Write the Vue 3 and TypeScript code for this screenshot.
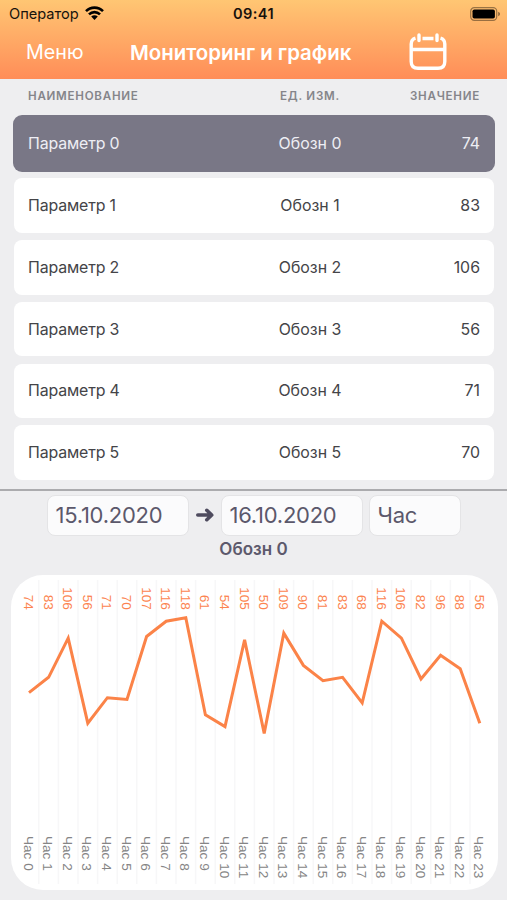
<script setup lang="ts">
interface Row {
  name: string
  unit: string
  value: number
}

const rows: Row[] = [74, 83, 106, 56, 71, 70].map((value, i) => ({
  name: `Параметр ${i}`,
  unit: `Обозн ${i}`,
  value,
}))

const selected = 0

const readings: number[] = [
  74, 83, 106, 56, 71, 70, 107, 116, 118, 61, 54, 105,
  50, 109, 90, 81, 83, 68, 116, 106, 82, 96, 88, 56,
]

const step = 19.6
const points = readings.map((value, i) => ({
  value,
  label: `Час ${i}`,
  x: 18 + i * step,
  y: 42.8 + (118 - value) * 1.7,
}))
const line = points.map((p) => `${p.x.toFixed(1)},${p.y.toFixed(1)}`).join(' ')
const gridLines = points.slice(1).map((p) => p.x - step / 2)
</script>

<template>
  <div class="screen">
    <header class="top">
      <div class="status">
        <div class="carrier">
          <span class="operator">Оператор</span>
          <svg class="wifi" width="19" height="14" viewBox="0 0 19 14">
            <g fill="none" stroke="#000" stroke-width="2.6">
              <path d="M1 5.2C5.8 .4 13.2 .4 18 5.2" />
              <path d="M4 8.4C7.1 5.3 11.9 5.3 15 8.4" />
            </g>
            <path d="M6.2 10.6C8.1 8.8 10.9 8.8 12.8 10.6L9.5 14Z" />
          </svg>
        </div>
        <span class="clock">09:41</span>
        <svg class="battery" width="31" height="14" viewBox="0 0 31 14">
          <rect x=".7" y=".7" width="26" height="12.6" rx="3.6" fill="none" stroke="#000" stroke-opacity=".4" stroke-width="1.2" />
          <rect x="2.5" y="2.4" width="22.4" height="9.2" rx="1.8" />
          <path d="M28.2 4.8c2.4.8 2.4 3.6 0 4.4z" fill-opacity=".45" />
        </svg>
      </div>
      <nav class="nav">
        <span class="menu">Меню</span>
        <h1 class="title">Мониторинг и график</h1>
        <svg class="calendar" width="38" height="38" viewBox="0 0 38 38" fill="none" stroke="#fff" stroke-width="3.4">
          <path d="M6.5 5.1C3.8 5.9 2.2 8 2.2 11V28.5C2.2 33 4.6 35.3 9 35.3H29C33.4 35.3 35.8 33 35.8 28.5V11C35.8 8 34.2 5.9 31.5 5.1" />
          <path d="M13.5 5.5H24.5M2.2 16.5H35.8" />
          <path d="M10 2V7.5M28 2V7.5" stroke-linecap="round" />
        </svg>
      </nav>
    </header>

    <div class="columns heads">
      <span class="head-name">Наименование</span>
      <span class="center">Ед. изм.</span>
      <span class="right">Значение</span>
    </div>

    <main class="list">
      <div
        v-for="(row, i) in rows"
        :key="row.name"
        class="columns row"
        :class="{ selected: i === selected }"
      >
        <span class="name">{{ row.name }}</span>
        <span class="center">{{ row.unit }}</span>
        <span class="right">{{ row.value }}</span>
      </div>
    </main>

    <section class="panel">
      <div class="filters">
        <div class="field date">15.10.2020</div>
        <svg class="arrow" width="18" height="14" viewBox="0 0 18 14" fill="none" stroke="#4e4b5e" stroke-width="3.6" stroke-linecap="round" stroke-linejoin="round">
          <path d="M1.8 7H15M10.8 2.3L15.7 7L10.8 11.7" />
        </svg>
        <div class="field date">16.10.2020</div>
        <div class="field period">Час</div>
      </div>
      <h2 class="caption">Обозн 0</h2>
      <svg class="chart" width="487" height="315" viewBox="0 0 487 315">
        <line v-for="x in gridLines" :key="x" class="grid" :x1="x" :x2="x" y1="5" y2="309" />
        <g v-for="p in points" :key="p.label">
          <text class="value" text-anchor="end" :transform="`translate(${p.x - 5.1} 34.9) rotate(90)`">{{ p.value }}</text>
          <text class="hour" :transform="`translate(${p.x - 5.5} 261) rotate(90)`">{{ p.label }}</text>
        </g>
        <polyline class="curve" :points="line" />
      </svg>
    </section>
  </div>
</template>

<style>
body {
  margin: 0;
  background: #eeeef0;
}
</style>

<style scoped>
.screen {
  box-sizing: border-box;
  width: 507px;
  height: 900px;
  overflow: hidden;
  background: #eeeef0;
  font-family: Inter, "Liberation Sans", sans-serif;
  color: #444448;
}

.top {
  height: 79px;
  background: linear-gradient(#ffc673, #ff8d58);
}

.status {
  display: grid;
  grid-template-columns: 1fr auto 1fr;
  align-items: center;
  height: 27px;
  padding: 0 6px 0 9px;
  color: #17120c;
}

.carrier {
  display: flex;
  align-items: center;
  gap: 6px;
}

.operator {
  font-size: 14.6px;
}

.wifi {
  margin-top: -2px;
}

.clock {
  margin-right: 3px;
  font-size: 14.6px;
  font-weight: 600;
  letter-spacing: 0.4px;
}

.battery {
  justify-self: end;
}

.nav {
  display: grid;
  grid-template-columns: 104px 279px 38px;
  align-items: center;
  height: 50px;
  padding-left: 26px;
  color: #fff;
}

.menu {
  font-size: 19.7px;
}

.title {
  margin: 0;
  font-size: 20.4px;
  font-weight: 600;
  white-space: nowrap;
}

.columns {
  display: grid;
  grid-template-columns: 1fr 120px 1fr;
  align-items: center;
}

.center {
  margin: 0 -56px 0 56px;
  text-align: center;
}

.right {
  text-align: right;
}

.heads {
  height: 33px;
  padding: 0 27px 0 28px;
  font-size: 11.6px;
  font-weight: 600;
  letter-spacing: 0.74px;
  text-transform: uppercase;
  color: #85858a;
}

.list {
  display: flex;
  flex-direction: column;
  gap: 7.2px;
  padding: 4px 13.5px 0 14px;
}

.row {
  box-sizing: border-box;
  height: 54.6px;
  padding: 0 13.5px 0 14px;
  border-radius: 8px;
  background: #fff;
  font-size: 15.9px;
}

.row.selected {
  height: 57px;
  margin: -1px -1px -0.9px;
  padding: 0 14.5px 0 15px;
  border-radius: 9px;
  background: #797786;
  color: #eeeef4;
}

.name {
  letter-spacing: -0.15px;
}

.panel {
  display: flex;
  flex-direction: column;
  align-items: center;
  margin-top: 9px;
  border-top: 2px solid #ababae;
}

.filters {
  display: flex;
  align-items: center;
  margin-top: 3.6px;
}

.field {
  box-sizing: border-box;
  height: 41px;
  padding-left: 8px;
  border: 1px solid #e4e4e6;
  border-radius: 8px;
  background: #fbfbfc;
  font-size: 22px;
  line-height: 39px;
  letter-spacing: -0.25px;
  color: #5b586b;
}

.date {
  width: 142px;
}

.period {
  width: 92px;
  margin-left: 6px;
}

.arrow {
  margin: 0 7px;
}

.caption {
  margin: 3px 0 0;
  height: 21px;
  font-size: 17px;
  line-height: 21px;
  font-weight: 600;
  color: #5c596c;
}

.chart {
  display: block;
  margin: 15px 0 0 1px;
  border-radius: 32px;
  background: #fff;
  font-family: "Liberation Sans", sans-serif;
  font-size: 13.6px;
  font-kerning: none;
}

.grid {
  stroke: #f7f7f8;
  stroke-width: 1.5;
}

.value {
  fill: #fc8450;
}

.hour {
  fill: #858585;
}

.curve {
  fill: none;
  stroke: #fb8348;
  stroke-width: 3;
}
</style>
